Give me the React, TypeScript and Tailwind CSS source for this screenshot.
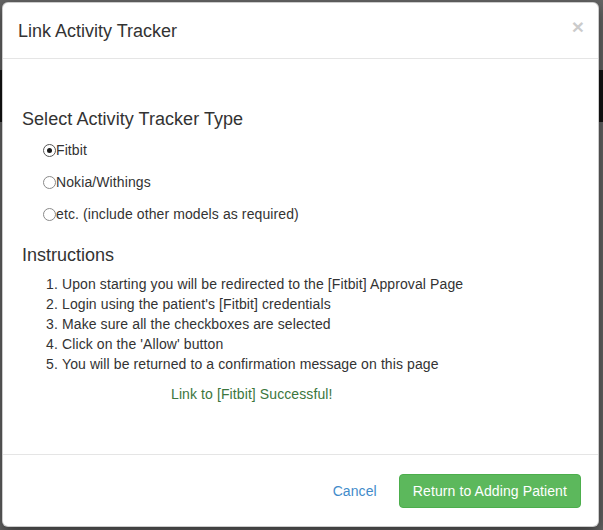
import React from "react";

const trackers = [
  { label: "Fitbit", checked: true },
  { label: "Nokia/Withings", checked: false },
  { label: "etc. (include other models as required)", checked: false },
];

const steps = [
  "Upon starting you will be redirected to the [Fitbit] Approval Page",
  "Login using the patient's [Fitbit] credentials",
  "Make sure all the checkboxes are selected",
  "Click on the 'Allow' button",
  "You will be returned to a confirmation message on this page",
];

function Radio({ checked }: { checked: boolean }) {
  return (
    <span
      className={`flex h-[13px] w-[13px] shrink-0 items-center justify-center rounded-full border bg-white ${
        checked ? "border-[#555]" : "border-[#8a8a8a]"
      }`}
    >
      {checked && <span className="h-[5px] w-[5px] rounded-full bg-[#1a1a1a]" />}
    </span>
  );
}

export default function App() {
  return (
    <div
      className="relative h-[530px] w-[603px] overflow-hidden bg-[#666] text-[14px] tracking-[0.1px] text-[#333]"
      style={{ fontFamily: '"Liberation Sans", Arial, sans-serif' }}
    >
      {/* page behind the backdrop */}
      <div className="h-[70px]" />
      <div className="h-[52px] bg-[#141414]" />

      {/* Modal */}
      <div className="absolute left-[2px] top-[2px] flex h-[525px] w-[597px] flex-col rounded-[6px] border border-[rgba(0,0,0,0.2)] bg-white shadow-[0_5px_15px_rgba(0,0,0,0.5)]">
        {/* Header */}
        <div className="flex h-[56px] shrink-0 items-center justify-between border-b border-[#e5e5e5] pl-[15px] pr-[14px]">
          <h4 className="text-[18px] leading-[26px] tracking-normal">Link Activity Tracker</h4>
          <button className="mb-[8px] text-[21px] font-bold leading-none text-black opacity-20">×</button>
        </div>

        {/* Body */}
        <div className="flex-1 pl-[19px] pt-[50px]">
          <h3 className="text-[18px] leading-[20px] tracking-[0.05px]">Select Activity Tracker Type</h3>
          <div className="mt-[5px] pl-[21px]">
            {trackers.map((t) => (
              <label key={t.label} className="flex h-[32px] items-center">
                <Radio checked={t.checked} />
                <span className="leading-[20px]">{t.label}</span>
              </label>
            ))}
          </div>

          <h3 className="mt-[15px] text-[18px] leading-[20px] tracking-normal">Instructions</h3>
          <ol className="mt-[9px] pl-[24px]">
            {steps.map((s, i) => (
              <li key={i} className="flex leading-[20px]">
                <span className="w-[16px] shrink-0">{i + 1}.</span>
                <span>{s}</span>
              </li>
            ))}
          </ol>

          <p className="mt-[10px] pl-[149px] leading-[20px] text-[#3c763d]">Link to [Fitbit] Successful!</p>
        </div>

        {/* Footer */}
        <div className="flex h-[72px] shrink-0 items-center justify-end gap-[22px] border-t border-[#e5e5e5] pr-[17px] pt-[1px]">
          <a className="leading-[20px] text-[#428bca]">Cancel</a>
          <button className="h-[34px] rounded-[4px] border border-[#4cae4c] bg-[#5cb85c] px-[13px] leading-[20px] text-white">
            Return to Adding Patient
          </button>
        </div>
      </div>
    </div>
  );
}
